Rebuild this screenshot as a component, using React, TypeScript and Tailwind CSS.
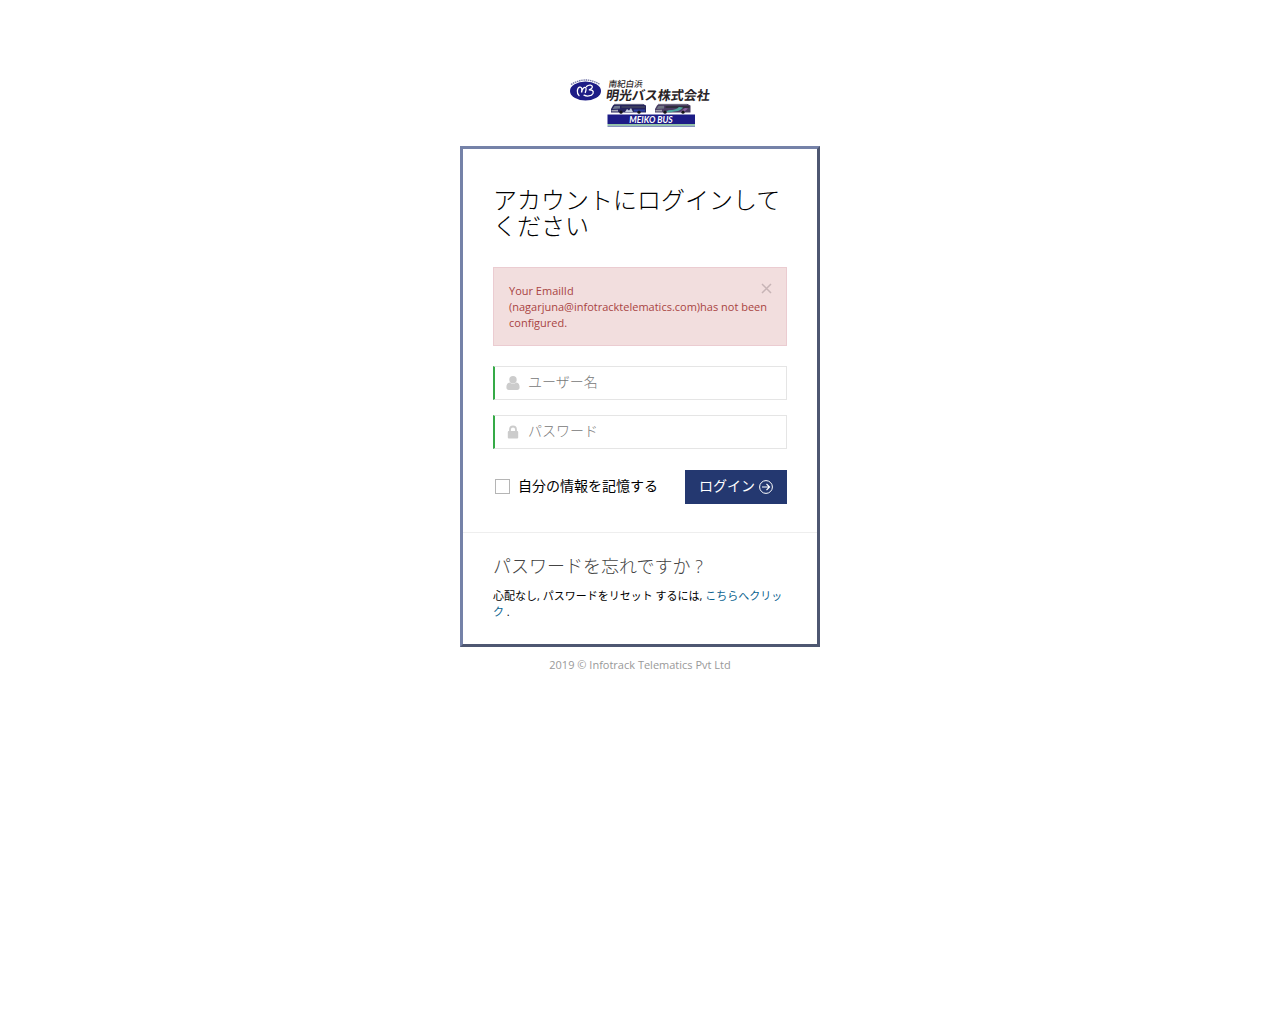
import React from 'react';

function UserIcon() {
  return (
    <svg viewBox="0 0 14 14" className="size-3.5 shrink-0 fill-[#cccccc]" aria-hidden="true">
      <circle cx="7" cy="3.800" r="3.700" />
      <path d="M3.700 6.500C1.300 6.800.4 8.700.4 11.200.4 13 1.300 14 2.800 14h8.400c1.500 0 2.400-1 2.400-2.800 0-2.500-.9-4.400-3.300-4.700C9.300 7.400 8.200 7.800 7 7.800s-2.300-.4-3.300-1.300z" />
    </svg>
  );
}

function LockIcon() {
  return (
    <svg viewBox="0 0 14 14" className="size-3.5 shrink-0 fill-[#cccccc]" aria-hidden="true">
      <path d="M4 6V4.500a3 3 0 0 1 6 0V6" fill="none" stroke="#cccccc" strokeWidth="1.800" />
      <rect x="1.800" y="6" width="10.400" height="7.500" rx="1" />
    </svg>
  );
}

function ArrowCircleIcon() {
  return (
    <svg viewBox="0 0 14 14" className="size-3.5 shrink-0 fill-none stroke-white" aria-hidden="true">
      <circle cx="7" cy="7" r="6.400" strokeWidth="1" />
      <path d="M3 7h7.500M7.500 4l3.100 3-3.100 3" strokeWidth="1.100" />
    </svg>
  );
}

function NavyBus() {
  return (
    <g>
      <path d="M43 27.500 44.500 26H73L76 27.500V34.500H41V31z" fill="#24235c" />
      <path d="M44 26.300H73" stroke="#8b8d9b" strokeWidth=".8" />
      <path d="M44.500 28 50 27.700V30.500L42.500 31z" fill="#6f7890" />
      <path d="M51.500 28H75V30H51.500z" fill="#3a3c5e" />
      <path d="M41.500 32 48 31.800V33.500H41.500z" fill="#a4a6b5" />
      <path d="M55 34 57 31 59 32.500 61 30 63 34z" fill="#c5cede" />
      <path d="M64 31.500H75V33.500H64z" fill="#2b3fa0" />
      <circle cx="51" cy="34.200" r="1.600" fill="#141418" />
      <circle cx="69" cy="34.200" r="1.600" fill="#141418" />
    </g>
  );
}

function PurpleBus() {
  return (
    <g>
      <path d="M87 27.500 88.500 26H117.500L120.500 27.500V34.500H85V31z" fill="#4a3d63" />
      <path d="M88 26.300H117" stroke="#85858f" strokeWidth=".8" />
      <path d="M88.500 28 94 27.700V30.500L86.500 31z" fill="#707483" />
      <path d="M95.500 28H119.500V30H95.500z" fill="#2f2d3c" />
      <path d="M85.500 32 92 31.800V33.500H85.500z" fill="#a0a0ac" />
      <path d="M96 34C100 30 104 34 109 29L113 29.500C109 34.500 103 33 101 34.500z" fill="#4fa79f" />
      <path d="M110 34 115 30 118 30.500 114 34z" fill="#8c62a0" />
      <circle cx="95" cy="34.200" r="1.600" fill="#141418" />
      <circle cx="113" cy="34.200" r="1.600" fill="#141418" />
    </g>
  );
}

function Logo() {
  return (
    <svg viewBox="0 0 140 50" className="h-[50px] w-[140px] overflow-visible" role="img" aria-label="明光バス株式会社">
      <path d="M1 6.500Q15.500-2.500 30 6.500" fill="none" stroke="#7477a8" strokeWidth="1.400" strokeDasharray="1.500 .7" />
      <ellipse cx="15.500" cy="13" rx="15.500" ry="9.500" fill="#1d1c86" />
      <path
        d="M9 17.500C6.500 15.500 7 10 9.500 9.200 11.800 8.600 12.300 11 11.500 14.500 12.300 11 14 8.800 15.500 9.500 16.800 10.200 16 12.500 15.300 14.500M16.500 8.500C19 6 23 7 22.200 9.500 21.500 11.300 20 11.700 18.800 11.800 22 11.500 24 13 23 15.500 21.500 18.500 16.500 18.500 14 17.200"
        fill="none"
        stroke="white"
        strokeWidth="1.300"
        strokeLinecap="round"
      />
      <g fill="#292326" transform="skewX(-8)" fontFamily='"Noto Sans CJK JP", sans-serif'>
        <text x="39.500" y="9" fontSize="8.500" fontWeight="500">南紀白浜</text>
        <text x="38.500" y="22" fontSize="13" fontWeight="700">明光バス株式会社</text>
      </g>
      <NavyBus />
      <PurpleBus />
      <rect x="37.500" y="36.500" width="87.500" height="9.500" fill="#1d1c86" />
      <rect x="37.500" y="46" width="87.500" height="1.800" fill="#92c6a4" />
      <rect x="37.500" y="47.800" width="87.500" height="1" fill="#6878ae" />
      <text
        x="81"
        y="45"
        textAnchor="middle"
        fill="white"
        fontFamily="Lato, sans-serif"
        fontSize="8.500"
        fontWeight="700"
        fontStyle="italic"
      >
        MEIKO BUS
      </text>
    </svg>
  );
}

export default function App() {
  return (
    <div className="min-h-screen bg-white pt-[78px] font-['Open_Sans','Noto_Sans_CJK_JP',sans-serif] text-black">
      <header className="flex justify-center">
        <Logo />
      </header>

      <main className="mx-auto mt-[18px] w-full max-w-[360px] border-3 border-t-[#7582a8] border-r-[#4e5771] border-b-[#4e5771] border-l-[#7582a8]">
        <form className="px-[30px] pt-[38px] pb-7" onSubmit={(e) => e.preventDefault()}>
          <h1 className="text-2xl leading-[26px] font-light">アカウントにログインしてください</h1>

          <div
            role="alert"
            className="mt-7 flex items-start border border-[#ebccd1] bg-[#f2dede] pt-[15px] pr-3.5 pb-3.5 pl-[15px] text-[11px] leading-4 text-[#a94442]"
          >
            <p className="-mr-6 grow">
              Your EmailId
              <br />
              (nagarjuna@infotracktelematics.com)has not been configured.
            </p>
            <button type="button" aria-label="Close" className="shrink-0">
              <svg viewBox="0 0 11 11" className="size-[11px] stroke-[#c7b4b6]" aria-hidden="true">
                <path d="M1 1l9 9M10 1l-9 9" strokeWidth="1.500" />
              </svg>
            </button>
          </div>

          <div className="mt-5 flex h-[34px] items-center border border-l-2 border-[#e5e5e5] border-l-[#35aa47] pl-[11px]">
            <UserIcon />
            <input
              type="text"
              aria-label="ユーザー名"
              placeholder="ユーザー名"
              className="ml-2 h-full min-w-0 grow pb-1 text-sm font-light outline-none placeholder:text-[#777777]"
            />
          </div>
          <div className="mt-[15px] flex h-[34px] items-center border border-l-2 border-[#e5e5e5] border-l-[#35aa47] pl-[11px]">
            <LockIcon />
            <input
              type="password"
              aria-label="パスワード"
              placeholder="パスワード"
              className="ml-2 h-full min-w-0 grow pb-1 text-sm font-light outline-none placeholder:text-[#777777]"
            />
          </div>

          <div className="mt-[21px] flex items-center justify-between">
            <label className="flex items-center gap-2 pb-0.5 pl-0.5 text-sm leading-5">
              <input type="checkbox" className="size-[15px] appearance-none border border-[#b5b5b5] bg-white checked:bg-[#243870]" />
              自分の情報を記憶する
            </label>
            <button type="submit" className="flex h-[34px] items-center gap-1 bg-[#243870] px-3.5 text-sm text-white">
              <span className="pb-0.5">ログイン</span>
              <ArrowCircleIcon />
            </button>
          </div>
        </form>

        <section className="border-t border-[#eeeeee] px-[30px] pt-[21px] pb-6">
          <h2 className="text-lg leading-6 font-light text-[#444444]">パスワードを忘れですか ?</h2>
          <p className="mt-2.5 text-[11px] leading-4">
            心配なし, パスワードをリセット するには,{' '}
            <a href="#reset" className="text-[#0d638f]">
              こちらへクリック
            </a>{' '}
            .
          </p>
        </section>
      </main>

      <footer className="mt-2.5 text-center text-[11px] leading-4 text-[#999999]">2019 © Infotrack Telematics Pvt Ltd</footer>
    </div>
  );
}
